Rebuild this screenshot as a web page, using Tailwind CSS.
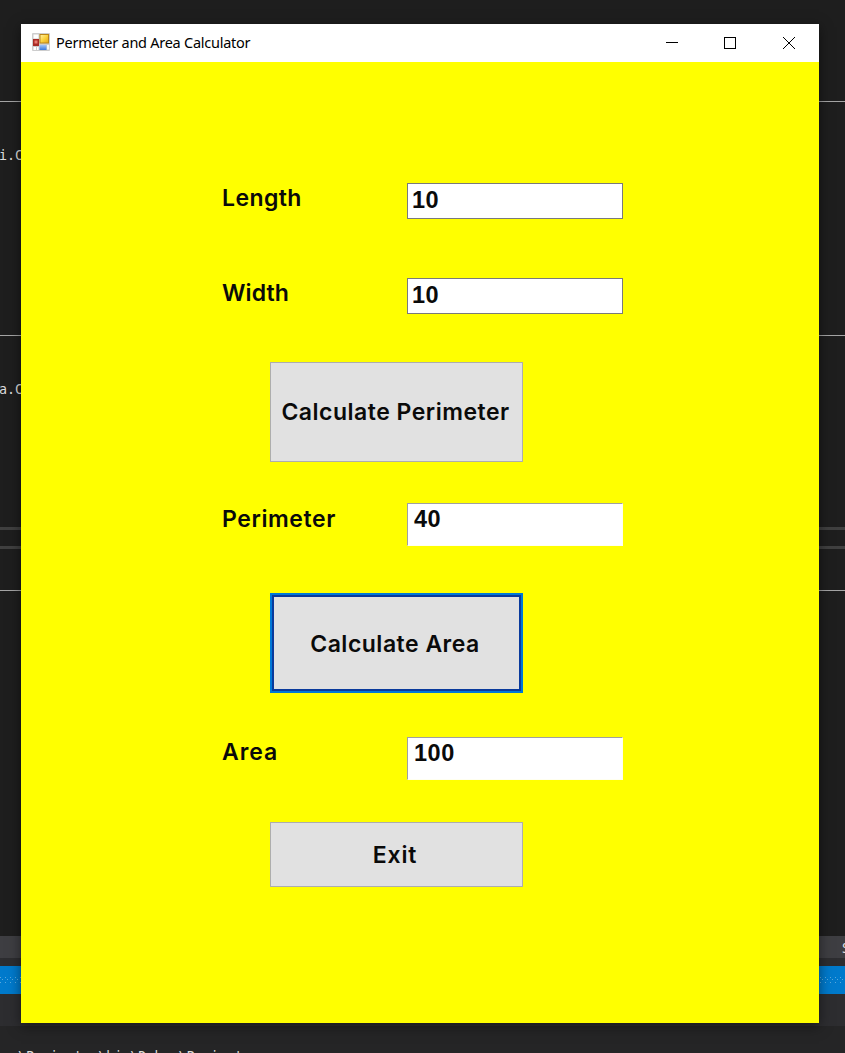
<!DOCTYPE html>
<html lang="en">
<head>
<meta charset="utf-8">
<title>Permeter and Area Calculator</title>
<script src="https://cdn.jsdelivr.net/npm/@tailwindcss/browser@4"></script>
</head>
<body class="relative h-[1053px] w-[845px] overflow-hidden bg-[#1e1e1e]">
  <!-- Editor behind the window -->
  <div class="flex h-full w-full flex-col font-['DejaVu_Sans_Mono',monospace] text-[13.33px] text-[#dcdcdc]">
    <div class="h-[101px]"></div>
    <div class="h-px bg-[#a5a5a5]"></div>
    <div class="-ml-px h-[233px] pt-[46px] leading-4 whitespace-pre">i.Calculate</div>
    <div class="h-px bg-[#a5a5a5]"></div>
    <div class="-ml-px h-[191px] pt-[46px] leading-4 whitespace-pre">a.Calculate</div>
    <div class="h-[3px] bg-[#404040]"></div>
    <div class="h-4"></div>
    <div class="h-[3px] bg-[#404040]"></div>
    <div class="h-[41px]"></div>
    <div class="h-px bg-[#a5a5a5]"></div>
    <div class="h-[345px]"></div>
    <div class="flex h-[22px] items-center bg-[#3e3e42] pl-[842px] font-['Noto_Sans',sans-serif] text-[14px]">S</div>
    <div class="h-2 bg-[#2d2d30]"></div>
    <div class="flex h-7 items-center bg-[#007acc]">
      <svg class="h-[7px] w-full" shape-rendering="crispEdges"><defs><pattern id="grip" width="5" height="5" patternUnits="userSpaceOnUse"><rect width="1" height="1" fill="#59a8de"/><rect x="2" y="2" width="1" height="1" fill="#59a8de"/></pattern></defs><rect width="845" height="7" fill="url(#grip)"/></svg>
    </div>
    <div class="h-8 bg-[#2d2d30]"></div>
    <div class="h-[27px] overflow-hidden bg-[#252526] pt-[23px] pl-[18px] leading-4 whitespace-pre">\Perimeter\bin\Debug\Perimeter</div>
  </div>

  <!-- Calculator window -->
  <main class="absolute top-6 left-[21px] flex h-[999px] w-[798px] flex-col bg-[#ffff00] shadow-[0_3px_12px_rgba(0,0,0,0.5)]">
    <header class="flex h-[38px] shrink-0 items-center bg-white pl-[11px]">
      <svg class="mb-0.5 h-[18px] w-[18px]" viewBox="0 0 18 18">
        <defs>
          <linearGradient id="gold" x2="1" y2="1"><stop stop-color="#fff0a0"/><stop offset=".5" stop-color="#fbd33f"/><stop offset="1" stop-color="#e5a81c"/></linearGradient>
          <linearGradient id="blue" x2="0" y2="1"><stop stop-color="#9fc4fa"/><stop offset="1" stop-color="#3a78dc"/></linearGradient>
        </defs>
        <rect width="18" height="18" rx="1" fill="#cdcdcd"/>
        <path d="M1.500 1.500h5v4h-5zM1.500 14h2.500v3H1.500zM5 14h1.500v3H5z" fill="#fff"/>
        <rect x="15" y="12" width="2" height="4.500" fill="#f5f5f5"/>
        <rect x="1" y="6" width="6" height="7" fill="#a82b25"/><rect x="2.500" y="7.500" width="3" height="3" fill="#e77b72"/>
        <rect x="7.500" y="1" width="9.500" height="9.500" fill="#bb8617"/><rect x="8.500" y="2" width="7.500" height="7.500" fill="url(#gold)"/>
        <rect x="7.500" y="12" width="7" height="5" fill="url(#blue)"/>
      </svg>
      <h1 class="mb-0.5 ml-[6px] w-[194px] font-['Noto_Sans',sans-serif] text-[14.5px] leading-5 tracking-[-0.26px] whitespace-nowrap text-black">Permeter and Area Calculator</h1>
      <svg class="ml-auto h-[38px] w-[160px]" viewBox="0 0 160 38" fill="none" stroke="#000" stroke-width="1">
        <path d="M7 18.500h12" shape-rendering="crispEdges"/>
        <path d="M65.500 13.500h11v11h-11z" shape-rendering="crispEdges"/>
        <path d="M124 13l12 12M136 13l-12 12"/>
      </svg>
    </header>
    <form class="flex flex-col font-['Inter',sans-serif] text-[23px] leading-7 font-semibold tracking-[0.5px] text-[#0a0a0a]">
      <div class="mt-[121px] ml-[201px] flex h-9">
        <label class="w-[185px] pt-px tracking-[0.4px]">Length</label>
        <div class="w-[216px] border border-[#7a7a7a] bg-white pt-[2px] pl-[4px] font-['Liberation_Sans',sans-serif] text-[23.5px] font-bold">10</div>
      </div>
      <div class="mt-[59px] ml-[201px] flex h-9">
        <label class="w-[185px] pt-px tracking-[0.1px]">Width</label>
        <div class="w-[216px] border border-[#7a7a7a] bg-white pt-[2px] pl-[4px] font-['Liberation_Sans',sans-serif] text-[23.5px] font-bold">10</div>
      </div>
      <button type="button" class="mt-12 ml-[249px] h-[100px] w-[253px] border border-[#adadad] bg-[#e1e1e1] pr-[2px] whitespace-nowrap">Calculate Perimeter</button>
      <div class="mt-[41px] ml-[201px] flex h-[43px]">
        <label class="w-[185px] pt-[2px] tracking-[0.6px]">Perimeter</label>
        <div class="w-[216px] border border-t-[#a0a0a0] border-r-[#fffff0] border-b-[#fffff0] border-l-[#a0a0a0] bg-white pt-px pl-[6px] font-['Liberation_Sans',sans-serif] text-[23.5px] font-bold">40</div>
      </div>
      <button type="button" class="mt-[47px] ml-[249px] h-[100px] w-[253px] border-2 border-[#0078d7] bg-[#e1e1e1] pt-px pr-[3px] inset-ring-2 inset-ring-[#0a3a9c] whitespace-nowrap">Calculate Area</button>
      <div class="mt-11 ml-[201px] flex h-[43px]">
        <label class="w-[185px] pt-px tracking-[0.9px]">Area</label>
        <div class="w-[216px] border border-t-[#a0a0a0] border-r-[#fffff0] border-b-[#fffff0] border-l-[#a0a0a0] bg-white pt-px pl-[6px] font-['Liberation_Sans',sans-serif] text-[23.5px] font-bold">100</div>
      </div>
      <button type="button" class="mt-[42px] ml-[249px] h-[65px] w-[253px] border border-[#adadad] bg-[#e1e1e1] pr-[3px] tracking-[0.9px]">Exit</button>
    </form>
  </main>
</body>
</html>
